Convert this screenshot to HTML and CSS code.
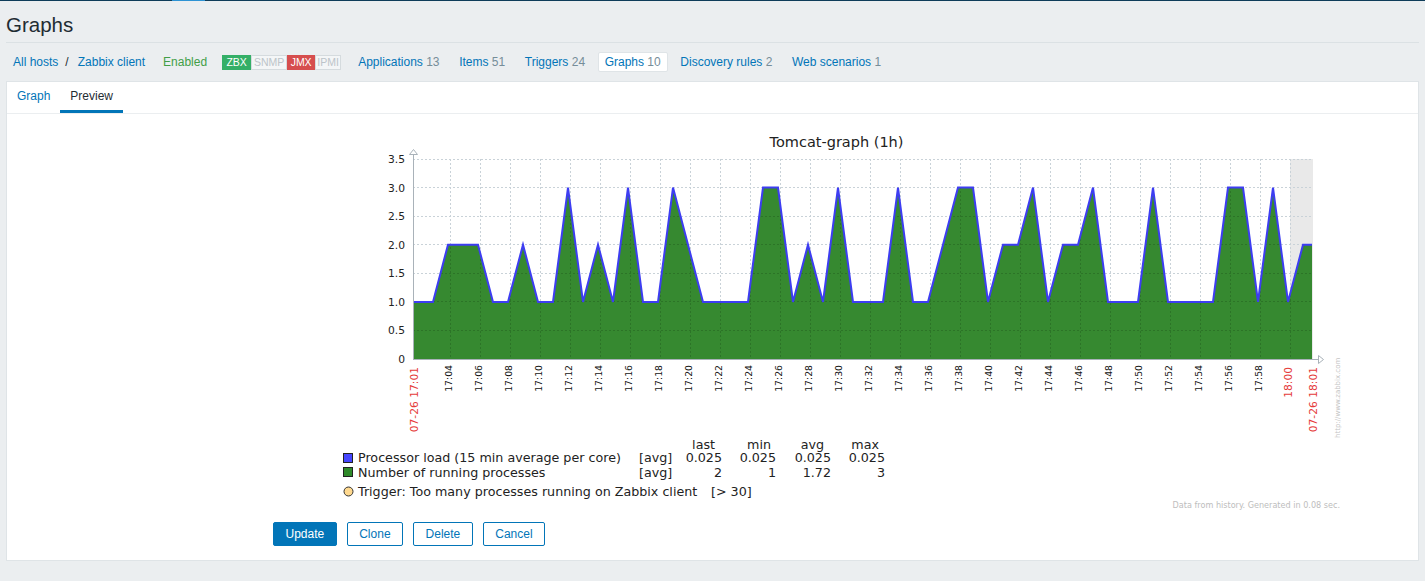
FILE: index.html
```html
<!DOCTYPE html>
<html lang="en">
<head>
<meta charset="utf-8">
<title>Graphs</title>
<link rel="stylesheet" href="styles.css">
</head>
<body>
<div class="topbar"><span class="topbar-hl"></span></div>
<header class="page-header"><h1>Graphs</h1></header>
<nav class="host-nav">
  <div class="crumbs"><a href="#">All hosts</a><span class="sep">/</span><a href="#">Zabbix client</a></div>
  <span class="status">Enabled</span>
  <div class="tags">
    <span class="tag tag-zbx">ZBX</span>
    <span class="tag tag-off tag-snmp">SNMP</span>
    <span class="tag tag-jmx">JMX</span>
    <span class="tag tag-off tag-ipmi">IPMI</span>
  </div>
  <ul class="nav-tabs">
    <li><a href="#">Applications</a> <span class="count">13</span></li>
    <li><a href="#">Items</a> <span class="count">51</span></li>
    <li><a href="#">Triggers</a> <span class="count">24</span></li>
    <li class="selected"><a href="#">Graphs</a> <span class="count">10</span></li>
    <li><a href="#">Discovery rules</a> <span class="count">2</span></li>
    <li><a href="#">Web scenarios</a> <span class="count">1</span></li>
  </ul>
</nav>
<main class="card">
  <ul class="tabs">
    <li><a href="#">Graph</a></li>
    <li class="active">Preview</li>
  </ul>
  <div class="preview">
    <svg class="graph" width="1012" height="390" viewBox="333 125 1012 390" xmlns="http://www.w3.org/2000/svg">
      <defs>
        <clipPath id="areaClip">
          <polygon points="413,301.9 433,301.9 448,244.7 463,244.7 478,244.7 493,301.9 508,301.9 523,244.7 538,301.9 553,301.9 568,187.6 583,301.9 598,244.7 613,301.9 628,187.6 643,301.9 658,301.9 673,187.6 703,301.9 748,301.9 763,187.6 778,187.6 793,301.9 808,244.7 823,301.9 838,187.6 853,301.9 883,301.9 898,187.6 913,301.9 928,301.9 958,187.6 973,187.6 988,301.9 1003,244.7 1018,244.7 1033,187.6 1048,301.9 1063,244.7 1078,244.7 1093,187.6 1108,301.9 1138,301.9 1153,187.6 1168,301.9 1213,301.9 1228,187.6 1243,187.6 1258,301.9 1273,187.6 1288,301.9 1303,244.7 1312,244.7 1312,359 413,359"/>
        </clipPath>
      </defs>
      <text class="g-title" x="836.5" y="147" text-anchor="middle">Tomcat-graph (1h)</text>
      <rect class="g-shade" x="1290" y="159" width="23" height="200"/>
      <path class="g-grid" d="M413 159.5H1313M413 187.5H1313M413 216.5H1313M413 244.5H1313M413 273.5H1313M413 301.5H1313M413 330.5H1313M450.5 159V359M480.5 159V359M510.5 159V359M540.5 159V359M570.5 159V359M600.5 159V359M630.5 159V359M660.5 159V359M690.5 159V359M720.5 159V359M750.5 159V359M780.5 159V359M810.5 159V359M840.5 159V359M870.5 159V359M900.5 159V359M930.5 159V359M960.5 159V359M990.5 159V359M1020.5 159V359M1050.5 159V359M1080.5 159V359M1110.5 159V359M1140.5 159V359M1170.5 159V359M1200.5 159V359M1230.5 159V359M1260.5 159V359M1290.5 159V359"/>
      <polygon class="g-area" points="413,301.9 433,301.9 448,244.7 463,244.7 478,244.7 493,301.9 508,301.9 523,244.7 538,301.9 553,301.9 568,187.6 583,301.9 598,244.7 613,301.9 628,187.6 643,301.9 658,301.9 673,187.6 703,301.9 748,301.9 763,187.6 778,187.6 793,301.9 808,244.7 823,301.9 838,187.6 853,301.9 883,301.9 898,187.6 913,301.9 928,301.9 958,187.6 973,187.6 988,301.9 1003,244.7 1018,244.7 1033,187.6 1048,301.9 1063,244.7 1078,244.7 1093,187.6 1108,301.9 1138,301.9 1153,187.6 1168,301.9 1213,301.9 1228,187.6 1243,187.6 1258,301.9 1273,187.6 1288,301.9 1303,244.7 1312,244.7 1312,359 413,359"/>
      <g clip-path="url(#areaClip)">
        <path class="g-grid-dark" d="M413 159.5H1313M413 187.5H1313M413 216.5H1313M413 244.5H1313M413 273.5H1313M413 301.5H1313M413 330.5H1313M450.5 159V359M480.5 159V359M510.5 159V359M540.5 159V359M570.5 159V359M600.5 159V359M630.5 159V359M660.5 159V359M690.5 159V359M720.5 159V359M750.5 159V359M780.5 159V359M810.5 159V359M840.5 159V359M870.5 159V359M900.5 159V359M930.5 159V359M960.5 159V359M990.5 159V359M1020.5 159V359M1050.5 159V359M1080.5 159V359M1110.5 159V359M1140.5 159V359M1170.5 159V359M1200.5 159V359M1230.5 159V359M1260.5 159V359M1290.5 159V359"/>
      </g>
      <polyline class="g-line" points="413,301.9 433,301.9 448,244.7 463,244.7 478,244.7 493,301.9 508,301.9 523,244.7 538,301.9 553,301.9 568,187.6 583,301.9 598,244.7 613,301.9 628,187.6 643,301.9 658,301.9 673,187.6 703,301.9 748,301.9 763,187.6 778,187.6 793,301.9 808,244.7 823,301.9 838,187.6 853,301.9 883,301.9 898,187.6 913,301.9 928,301.9 958,187.6 973,187.6 988,301.9 1003,244.7 1018,244.7 1033,187.6 1048,301.9 1063,244.7 1078,244.7 1093,187.6 1108,301.9 1138,301.9 1153,187.6 1168,301.9 1213,301.9 1228,187.6 1243,187.6 1258,301.9 1273,187.6 1288,301.9 1303,244.7 1312,244.7"/>
      <path class="g-axis" d="M413.5 154V359.5H1318"/>
      <polygon class="g-arrow" points="409.5,154.5 413.5,149.5 417.5,154.5"/>
      <polygon class="g-arrow" points="1318.5,355.5 1323.5,359.5 1318.5,363.5"/>

      <text class="g-ylab" x="405" y="163" text-anchor="end">3.5</text>
      <text class="g-ylab" x="405" y="191.6" text-anchor="end">3.0</text>
      <text class="g-ylab" x="405" y="220.1" text-anchor="end">2.5</text>
      <text class="g-ylab" x="405" y="248.7" text-anchor="end">2.0</text>
      <text class="g-ylab" x="405" y="277.3" text-anchor="end">1.5</text>
      <text class="g-ylab" x="405" y="305.9" text-anchor="end">1.0</text>
      <text class="g-ylab" x="405" y="334.4" text-anchor="end">0.5</text>
      <text class="g-ylab" x="405" y="363" text-anchor="end">0</text>

      <text class="g-red" transform="translate(417.5,367) rotate(-90)" text-anchor="end">07-26 17:01</text>
      <text class="g-tick" transform="translate(452,365) rotate(-90)" text-anchor="end">17:04</text>
      <text class="g-tick" transform="translate(482,365) rotate(-90)" text-anchor="end">17:06</text>
      <text class="g-tick" transform="translate(512,365) rotate(-90)" text-anchor="end">17:08</text>
      <text class="g-tick" transform="translate(542,365) rotate(-90)" text-anchor="end">17:10</text>
      <text class="g-tick" transform="translate(572,365) rotate(-90)" text-anchor="end">17:12</text>
      <text class="g-tick" transform="translate(602,365) rotate(-90)" text-anchor="end">17:14</text>
      <text class="g-tick" transform="translate(632,365) rotate(-90)" text-anchor="end">17:16</text>
      <text class="g-tick" transform="translate(662,365) rotate(-90)" text-anchor="end">17:18</text>
      <text class="g-tick" transform="translate(692,365) rotate(-90)" text-anchor="end">17:20</text>
      <text class="g-tick" transform="translate(722,365) rotate(-90)" text-anchor="end">17:22</text>
      <text class="g-tick" transform="translate(752,365) rotate(-90)" text-anchor="end">17:24</text>
      <text class="g-tick" transform="translate(782,365) rotate(-90)" text-anchor="end">17:26</text>
      <text class="g-tick" transform="translate(812,365) rotate(-90)" text-anchor="end">17:28</text>
      <text class="g-tick" transform="translate(842,365) rotate(-90)" text-anchor="end">17:30</text>
      <text class="g-tick" transform="translate(872,365) rotate(-90)" text-anchor="end">17:32</text>
      <text class="g-tick" transform="translate(902,365) rotate(-90)" text-anchor="end">17:34</text>
      <text class="g-tick" transform="translate(932,365) rotate(-90)" text-anchor="end">17:36</text>
      <text class="g-tick" transform="translate(962,365) rotate(-90)" text-anchor="end">17:38</text>
      <text class="g-tick" transform="translate(992,365) rotate(-90)" text-anchor="end">17:40</text>
      <text class="g-tick" transform="translate(1022,365) rotate(-90)" text-anchor="end">17:42</text>
      <text class="g-tick" transform="translate(1052,365) rotate(-90)" text-anchor="end">17:44</text>
      <text class="g-tick" transform="translate(1082,365) rotate(-90)" text-anchor="end">17:46</text>
      <text class="g-tick" transform="translate(1112,365) rotate(-90)" text-anchor="end">17:48</text>
      <text class="g-tick" transform="translate(1142,365) rotate(-90)" text-anchor="end">17:50</text>
      <text class="g-tick" transform="translate(1172,365) rotate(-90)" text-anchor="end">17:52</text>
      <text class="g-tick" transform="translate(1202,365) rotate(-90)" text-anchor="end">17:54</text>
      <text class="g-tick" transform="translate(1232,365) rotate(-90)" text-anchor="end">17:56</text>
      <text class="g-tick" transform="translate(1262,365) rotate(-90)" text-anchor="end">17:58</text>
      <text class="g-red" transform="translate(1292,367) rotate(-90)" text-anchor="end">18:00</text>
      <text class="g-red" transform="translate(1317,367) rotate(-90)" text-anchor="end">07-26 18:01</text>
      <text class="g-mark" transform="translate(1340,438) rotate(-90)">http://www.zabbix.com</text>

      <text class="g-leg" x="715" y="449" text-anchor="end">last</text>
      <text class="g-leg" x="771" y="449" text-anchor="end">min</text>
      <text class="g-leg" x="824" y="449" text-anchor="end">avg</text>
      <text class="g-leg" x="879" y="449" text-anchor="end">max</text>

      <rect class="g-sw-blue" x="343.5" y="453.5" width="9" height="9"/>
      <text class="g-leg" x="358" y="462.3">Processor load (15 min average per core)</text>
      <text class="g-leg" x="639" y="462.3">[avg]</text>
      <text class="g-leg" x="722" y="462.3" text-anchor="end">0.025</text>
      <text class="g-leg" x="776" y="462.3" text-anchor="end">0.025</text>
      <text class="g-leg" x="831" y="462.3" text-anchor="end">0.025</text>
      <text class="g-leg" x="885" y="462.3" text-anchor="end">0.025</text>

      <rect class="g-sw-green" x="343.5" y="467.5" width="9" height="9"/>
      <text class="g-leg" x="358" y="476.7">Number of running processes</text>
      <text class="g-leg" x="639" y="476.7">[avg]</text>
      <text class="g-leg" x="722" y="476.7" text-anchor="end">2</text>
      <text class="g-leg" x="776" y="476.7" text-anchor="end">1</text>
      <text class="g-leg" x="831" y="476.7" text-anchor="end">1.72</text>
      <text class="g-leg" x="885" y="476.7" text-anchor="end">3</text>

      <circle class="g-trig" cx="348.5" cy="491.5" r="4.5"/>
      <text class="g-leg" x="358" y="495.7">Trigger: Too many processes running on Zabbix client</text>
      <text class="g-leg" x="711" y="495.7">[&gt; 30]</text>

      <text class="g-note" x="1340" y="508" text-anchor="end">Data from history. Generated in 0.08 sec.</text>
    </svg>
  </div>
  <div class="form-buttons">
    <button class="btn btn-primary" type="button">Update</button>
    <button class="btn" type="button">Clone</button>
    <button class="btn" type="button">Delete</button>
    <button class="btn" type="button">Cancel</button>
  </div>
</main>
</body>
</html>
```
FILE: styles.css
```css
html, body {
  margin: 0;
  padding: 0;
}

body {
  background: #ebeef0;
  font-family: "Liberation Sans", Arial, sans-serif;
  font-size: 12px;
  color: #1f2c33;
}

a {
  color: #0275b8;
  text-decoration: none;
}

.topbar {
  display: flex;
  height: 1px;
  background: #0e3c5a;
}

.topbar-hl {
  margin-left: 172px;
  width: 33px;
  background: #2d93d4;
}

.page-header {
  margin: 0 6px;
  height: 41px;
  border-bottom: 1px solid #dbe1e4;
  display: flex;
  align-items: flex-end;
}

.page-header h1 {
  margin: 0 0 5px 0;
  font-size: 20.5px;
  line-height: 24px;
  font-weight: normal;
  color: #1f2c33;
}

.host-nav {
  display: flex;
  align-items: center;
  height: 20px;
  padding: 9px 6px;
}

.crumbs {
  padding-left: 7px;
  display: flex;
  align-items: center;
}

.crumbs .sep {
  margin: 0 9px 0 7px;
  color: #1f2c33;
}

.status {
  margin-left: 18px;
  color: #429e47;
}

.tags {
  display: flex;
  margin-left: 15px;
}

.tag {
  box-sizing: border-box;
  height: 15px;
  line-height: 13px;
  font-size: 10.5px;
  text-align: center;
  border: 1px solid;
  color: #fff;
}

.tag-zbx {
  width: 29px;
  background: #34af67;
  border-color: #34af67;
}

.tag-jmx {
  width: 28px;
  background: #d64e4e;
  border-color: #d64e4e;
}

.tag-off {
  background: #f4f6f7;
  border-color: #d5dbde;
  color: #bcc4c9;
}

.tag-snmp {
  width: 36px;
}

.tag-ipmi {
  width: 26px;
}

.nav-tabs {
  display: flex;
  list-style: none;
  margin: 0 0 0 10px;
  padding: 0;
  gap: 5.6px;
}

.nav-tabs li {
  height: 18px;
  line-height: 18px;
  padding: 0 6px;
  border: 1px solid transparent;
  border-radius: 2px;
}

.nav-tabs li.selected {
  background: #fff;
  border-color: #dfe4e7;
}

.count {
  color: #768d99;
}

.card {
  margin: 0 6px;
  background: #fff;
  border: 1px solid #dfe4e7;
}

.tabs {
  display: flex;
  list-style: none;
  margin: 0;
  padding: 0;
  border-bottom: 1px solid #ebeef0;
}

.tabs li {
  height: 28px;
  line-height: 28px;
  padding: 0 10px;
  border-bottom: 3px solid transparent;
}

.tabs li.active {
  border-bottom-color: #0275b8;
  color: #1f2c33;
}

.preview {
  padding: 11px 0 0 326px;
}

.graph {
  display: block;
}

.g-title {
  font: 14.5px "DejaVu Sans", sans-serif;
  fill: #222;
}

.g-shade {
  fill: #e9e9e9;
}

.g-grid {
  fill: none;
  stroke: #c9d2d8;
  stroke-width: 1;
  stroke-dasharray: 2 2;
  shape-rendering: crispEdges;
}

.g-grid-dark {
  fill: none;
  stroke: #2c7427;
  stroke-width: 1;
  stroke-dasharray: 2 2;
  shape-rendering: crispEdges;
}

.g-area {
  fill: #368930;
}

.g-line {
  fill: none;
  stroke: #3d3df2;
  stroke-width: 2;
  stroke-linejoin: miter;
}

.g-axis {
  fill: none;
  stroke: #a9b2b9;
  stroke-width: 1;
  shape-rendering: crispEdges;
}

.g-arrow {
  fill: #fff;
  stroke: #a9b2b9;
  stroke-width: 1;
}

.g-ylab {
  font: 10.7px "DejaVu Sans", sans-serif;
  fill: #222;
}

.g-tick {
  font: 9.3px "DejaVu Sans", sans-serif;
  fill: #111;
}

.g-red {
  font: 10.7px "DejaVu Sans", sans-serif;
  fill: #e53b3b;
}

.g-mark {
  font: 7px "DejaVu Sans", sans-serif;
  fill: #c4c4c4;
}

.g-leg {
  font: 12.7px "DejaVu Sans", sans-serif;
  fill: #222;
}

.g-note {
  font: 8.1px "DejaVu Sans", sans-serif;
  fill: #bdbdbd;
}

.g-sw-blue {
  fill: #4646ff;
  stroke: #222;
  stroke-width: 1;
}

.g-sw-green {
  fill: #2f8a2a;
  stroke: #222;
  stroke-width: 1;
}

.g-trig {
  fill: #ffd98f;
  stroke: #333;
  stroke-width: 1;
}

.form-buttons {
  display: flex;
  gap: 10px;
  margin-top: 7px;
  padding: 0 0 14px 266px;
}

.btn {
  height: 24px;
  margin: 0;
  padding: 0 11.5px;
  font-family: "Liberation Sans", Arial, sans-serif;
  font-size: 12px;
  line-height: 22px;
  color: #0275b8;
  background: #fff;
  border: 1px solid #0275b8;
  border-radius: 2px;
}

.btn-primary {
  color: #fff;
  background: #0275b8;
}
```
